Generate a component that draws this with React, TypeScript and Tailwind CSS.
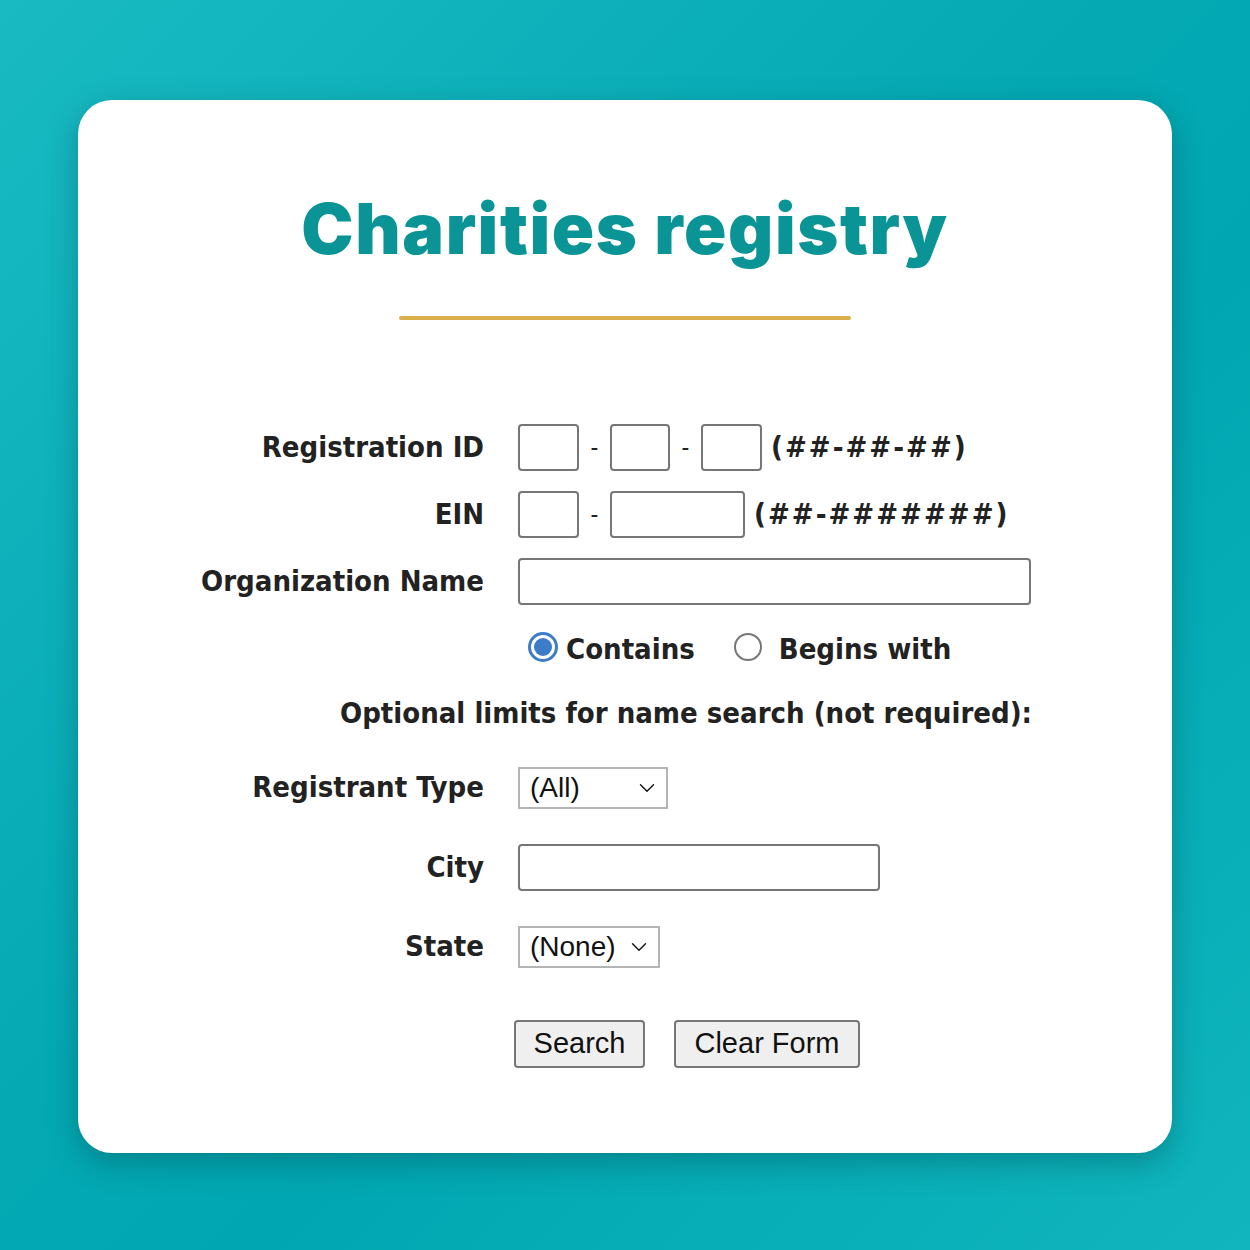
import { ChevronDown } from 'lucide-react';

const labelFont = "font-['DejaVu_Sans_Condensed','DejaVu_Sans',sans-serif] font-bold font-stretch-condensed text-[#222222]";

const Box = ({ w }: { w: string }) => (
  <input type="text" className={`${w} h-[47px] border-2 border-[#767676] rounded-[4px] bg-white outline-none`} />
);

const Dash = () => <span className={`${labelFont} w-[31px] text-center text-[24px] font-normal`}>-</span>;

const Row = ({ label, children, className = '' }: { label: string; children: React.ReactNode; className?: string }) => (
  <div className={`flex items-center ${className}`}>
    <div className={`${labelFont} w-[440px] pr-[34px] text-right text-[29px]`}>{label}</div>
    <div className="flex items-center">{children}</div>
  </div>
);

const Select = ({ w, value }: { w: string; value: string }) => (
  <div className={`${w} h-[42px] border-2 border-[#b4b4b4] bg-white flex items-center justify-between pl-[10px] pr-[6px] font-['Liberation_Sans',Arial,sans-serif] text-[28px] text-[#111111]`}>
    <span>{value}</span>
    <ChevronDown size={26} strokeWidth={1.3} />
  </div>
);

export default function App() {
  return (
    <div className="w-[1250px] h-[1250px] bg-[linear-gradient(135deg,#19bac2_0%,#04a9b4_45%,#00a7b2_60%,#10b5bd_100%)] pt-[100px] px-[78px]">
      <div className="h-[1053px] bg-white rounded-[34px] shadow-[0_10px_30px_rgba(0,60,70,0.35)] flex flex-col">
        <h1 className="mt-[79px] text-center font-['Inter',sans-serif] font-black text-[70px] leading-[100px] text-[#0b9496] tracking-[1.6px]">
          Charities registry
        </h1>
        <div className="mx-auto mt-[37px] w-[452px] h-[4px] rounded-full bg-[#dbae4a]" />

        <div className="mt-[104px] flex flex-col">
          <Row label="Registration ID" className="h-[47px]">
            <Box w="w-[61px]" />
            <Dash />
            <Box w="w-[60px]" />
            <Dash />
            <Box w="w-[61px]" />
            <span className={`${labelFont} ml-[9px] text-[29px] tracking-[2px]`}>(##-##-##)</span>
          </Row>
          <Row label="EIN" className="h-[47px] mt-[20px]">
            <Box w="w-[61px]" />
            <Dash />
            <Box w="w-[135px]" />
            <span className={`${labelFont} ml-[9px] text-[29px] tracking-[2px]`}>(##-#######)</span>
          </Row>
          <Row label="Organization Name" className="h-[47px] mt-[20px]">
            <Box w="w-[513px]" />
          </Row>

          <div className="flex items-center h-[40px] mt-[22px] ml-[440px]">
            <div className="w-[30px] h-[30px] rounded-full border-[3px] border-[#3d7cc9] flex items-center justify-center ml-[10px]">
              <div className="w-[18px] h-[18px] rounded-full bg-[#3d7cc9]" />
            </div>
            <span className={`${labelFont} ml-[8px] pt-[6px] text-[29px]`}>Contains</span>
            <div className="w-[28px] h-[28px] rounded-full border-2 border-[#767676] ml-[39px]" />
            <span className={`${labelFont} ml-[17px] pt-[6px] text-[29px]`}>Begins with</span>
          </div>

          <div className={`${labelFont} mt-[26px] h-[40px] leading-[40px] text-[29px] ml-[262px]`}>
            Optional limits for name search (not required):
          </div>

          <Row label="Registrant Type" className="h-[42px] mt-[34px]">
            <Select w="w-[150px]" value="(All)" />
          </Row>
          <Row label="City" className="h-[47px] mt-[35px]">
            <Box w="w-[362px]" />
          </Row>
          <Row label="State" className="h-[42px] mt-[35px]">
            <Select w="w-[142px]" value="(None)" />
          </Row>

          <div className="flex mt-[52px] ml-[436px] gap-[29px] font-['Liberation_Sans',Arial,sans-serif] text-[29px] text-[#111111]">
            <button className="w-[131px] h-[48px] bg-[#efefef] border-2 border-[#767676] rounded-[4px]">Search</button>
            <button className="w-[186px] h-[48px] bg-[#efefef] border-2 border-[#767676] rounded-[4px]">Clear Form</button>
          </div>
        </div>
      </div>
    </div>
  );
}
